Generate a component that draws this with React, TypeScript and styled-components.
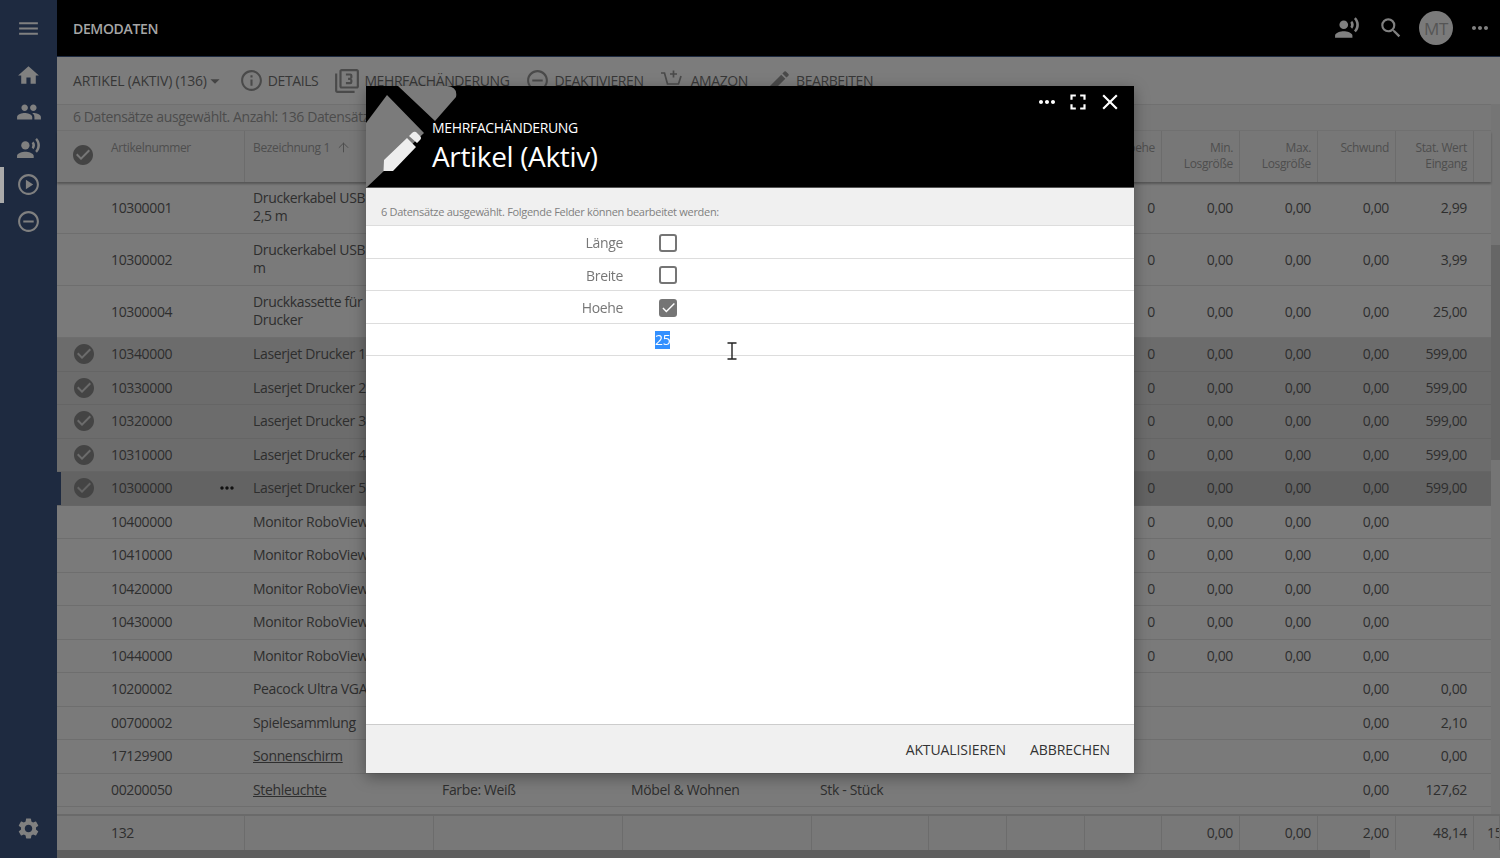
import React from "react";
import styled, { createGlobalStyle, css } from "styled-components";
import {
    MdCheckCircle,
    MdEdit,
    MdFilter3,
    MdHome,
    MdInfoOutline,
    MdMenu,
    MdMoreHoriz,
    MdOutlinePlayCircle,
    MdPeople,
    MdRecordVoiceOver,
    MdRemoveCircleOutline,
    MdSearch,
    MdSettings,
    MdArrowDropDown,
    MdFullscreen,
    MdClose,
    MdCheck,
} from "react-icons/md";
import { ArrowUp } from "lucide-react";

type Row = {
    num: string;
    name: React.ReactNode;
    link?: boolean;
    checked?: boolean;
    active?: boolean;
    tall?: boolean;
    cols?: string[];
    hoehe?: string;
    min?: string;
    max?: string;
    schwund?: string;
    stat?: string;
};

const stock = (stat?: string) => ({ hoehe: "0", min: "0,00", max: "0,00", schwund: "0,00", stat });

const ROWS: Row[] = [
    { num: "10300001", name: <>Druckerkabel USB<br />2,5 m</>, tall: true, ...stock("2,99") },
    { num: "10300002", name: <>Druckerkabel USB<br />m</>, tall: true, ...stock("3,99") },
    { num: "10300004", name: <>Druckkassette für L<br />Drucker</>, tall: true, ...stock("25,00") },
    { num: "10340000", name: "Laserjet Drucker 1000", checked: true, ...stock("599,00") },
    { num: "10330000", name: "Laserjet Drucker 2100", checked: true, ...stock("599,00") },
    { num: "10320000", name: "Laserjet Drucker 3100", checked: true, ...stock("599,00") },
    { num: "10310000", name: "Laserjet Drucker 4100", checked: true, ...stock("599,00") },
    { num: "10300000", name: "Laserjet Drucker 5100", checked: true, active: true, ...stock("599,00") },
    { num: "10400000", name: "Monitor RoboView 17", ...stock() },
    { num: "10410000", name: "Monitor RoboView 19", ...stock() },
    { num: "10420000", name: "Monitor RoboView 21", ...stock() },
    { num: "10430000", name: "Monitor RoboView 22", ...stock() },
    { num: "10440000", name: "Monitor RoboView 24", ...stock() },
    { num: "10200002", name: "Peacock Ultra VGA", schwund: "0,00", stat: "0,00" },
    { num: "00700002", name: "Spielesammlung", schwund: "0,00", stat: "2,10" },
    { num: "17129900", name: "Sonnenschirm", link: true, schwund: "0,00", stat: "0,00" },
    {
        num: "00200050",
        name: "Stehleuchte",
        link: true,
        cols: ["Farbe: Weiß", "Möbel & Wohnen", "Stk - Stück"],
        schwund: "0,00",
        stat: "127,62",
    },
];

const GlobalStyle = createGlobalStyle`
    html, body {
        margin: 0;
        height: 100%;
        overflow: hidden;
        background: #7a7a7a;
        font-family: "Open Sans", "Noto Sans", sans-serif;
        letter-spacing: -0.35px;
    }
    * {
        box-sizing: border-box;
    }
`;

const columns = css`
    display: grid;
    grid-template-columns: 188px 189px 189px 189px 117px 78px 78px 77px 78px 78px 78px 78px 1fr;
`;

const CartPlusIcon = () => (
    <svg width="24" height="24" viewBox="0 0 24 24" fill="none" stroke="currentColor" strokeWidth="1.7">
        <path d="M1 4h3.5l3 11h11l2.5-8" />
        <path d="M5 19.5h16" strokeWidth="2" />
        <path d="M13.5 1.5v7M10 5h7" />
    </svg>
);

const PencilMark = () => (
    <svg width="100" height="102" viewBox="0 0 100 102">
        <path
            fill="#7b7b7b"
            d="M32 0h49q11 1 9 11l-21 24zM0 37l21-28 37 38-58 55z"
        />
        <path
            fill="#eeeeee"
            d="M17.5 85l.5-11 23-22 9 9-23 24zM43 50l3-3q2-2 4-1l4 4q2 2 0 4l-3 3z"
        />
    </svg>
);

const IBeam = () => (
    <svg width="10" height="18" viewBox="0 0 10 18" fill="none" stroke="#222" strokeWidth="1.4">
        <path d="M0.5 1h9M5 1v16M0.5 17h9" />
    </svg>
);

export default function App() {
    return (
        <>
            <GlobalStyle />
            <Page>
                <Sidebar>
                    <MenuButton>
                        <MdMenu size={25} />
                    </MenuButton>
                    <NavItem>
                        <MdHome size={25} />
                    </NavItem>
                    <NavItem>
                        <MdPeople size={26} />
                    </NavItem>
                    <NavItem>
                        <MdRecordVoiceOver size={25} />
                    </NavItem>
                    <NavItem $active>
                        <MdOutlinePlayCircle size={25} />
                    </NavItem>
                    <NavItem>
                        <MdRemoveCircleOutline size={25} />
                    </NavItem>
                    <SettingsItem>
                        <MdSettings size={25} />
                    </SettingsItem>
                </Sidebar>
                <Main>
                    <TopBar>
                        <Brand>DEMODATEN</Brand>
                        <TopIcons>
                            <VoiceIcon>
                                <MdRecordVoiceOver size={26} />
                            </VoiceIcon>
                            <MdSearch size={26} />
                            <Avatar>MT</Avatar>
                            <MdMoreHoriz size={24} />
                        </TopIcons>
                    </TopBar>
                    <Toolbar>
                        <ViewPicker>
                            ARTIKEL (AKTIV) (136)
                            <MdArrowDropDown size={22} />
                        </ViewPicker>
                        <ToolButton>
                            <MdInfoOutline size={25} />
                            DETAILS
                        </ToolButton>
                        <ToolButton>
                            <MdFilter3 size={26} />
                            MEHRFACHÄNDERUNG
                        </ToolButton>
                        <ToolButton>
                            <MdRemoveCircleOutline size={25} />
                            DEAKTIVIEREN
                        </ToolButton>
                        <CartButton>
                            <CartPlusIcon />
                            AMAZON
                        </CartButton>
                        <PencilButton>
                            <MdEdit size={26} />
                            BEARBEITEN
                        </PencilButton>
                    </Toolbar>
                    <Middle>
                        <Content>
                            <InfoBar>6 Datensätze ausgewählt. Anzahl: 136 Datensätze</InfoBar>
                            <HeadRow>
                                <NumHead>
                                    <CheckSlot $head>
                                        <MdCheckCircle size={24} />
                                    </CheckSlot>
                                    Artikelnummer
                                </NumHead>
                                <HeadCell>
                                    Bezeichnung 1
                                    <SortIcon>
                                        <ArrowUp size={15} strokeWidth={1.6} />
                                    </SortIcon>
                                </HeadCell>
                                <HeadCell />
                                <HeadCell />
                                <HeadCell />
                                <HeadCell />
                                <HeadCell />
                                <HeadCell $right>Hoehe</HeadCell>
                                <HeadCell $right>Min.<br />Losgröße</HeadCell>
                                <HeadCell $right>Max.<br />Losgröße</HeadCell>
                                <HeadCell $right>Schwund</HeadCell>
                                <HeadCell $right>Stat. Wert<br />Eingang</HeadCell>
                            </HeadRow>
                            <Rows>
                                {ROWS.map((row) => (
                                    <DataRow key={row.num} $tall={row.tall} $checked={row.checked} $active={row.active}>
                                        <NumCell>
                                            <CheckSlot>{row.checked && <MdCheckCircle size={24} />}</CheckSlot>
                                            {row.num}
                                            {row.active && (
                                                <RowDots>
                                                    <MdMoreHoriz size={20} />
                                                </RowDots>
                                            )}
                                        </NumCell>
                                        <Cell $link={row.link} $wrap={row.tall}>{row.name}</Cell>
                                        <Cell>{row.cols?.[0]}</Cell>
                                        <Cell>{row.cols?.[1]}</Cell>
                                        <Cell>{row.cols?.[2]}</Cell>
                                        <Cell />
                                        <Cell />
                                        <Cell $right>{row.hoehe}</Cell>
                                        <Cell $right>{row.min}</Cell>
                                        <Cell $right>{row.max}</Cell>
                                        <Cell $right>{row.schwund}</Cell>
                                        <Cell $right>{row.stat}</Cell>
                                    </DataRow>
                                ))}
                            </Rows>
                        </Content>
                        <VScroll>
                            <VThumb />
                        </VScroll>
                    </Middle>
                    <SumRow>
                        <SumCell $first>132</SumCell>
                        <SumCell />
                        <SumCell />
                        <SumCell />
                        <SumCell />
                        <SumCell />
                        <SumCell />
                        <SumCell />
                        <SumCell $right>0,00</SumCell>
                        <SumCell $right>0,00</SumCell>
                        <SumCell $right>2,00</SumCell>
                        <SumCell $right>48,14</SumCell>
                        <SumCell>15</SumCell>
                    </SumRow>
                    <HScroll>
                        <HThumb />
                    </HScroll>
                </Main>
            </Page>
            <Backdrop>
                <Dialog>
                    <DialogHead>
                        <Mark>
                            <PencilMark />
                        </Mark>
                        <DialogActions>
                            <MdMoreHoriz size={24} />
                            <MdFullscreen size={26} />
                            <MdClose size={26} />
                        </DialogActions>
                        <DialogKicker>MEHRFACHÄNDERUNG</DialogKicker>
                        <DialogTitle>Artikel (Aktiv)</DialogTitle>
                    </DialogHead>
                    <DialogInfo>6 Datensätze ausgewählt. Folgende Felder können bearbeitet werden:</DialogInfo>
                    <FieldRow>
                        <FieldLabel>Länge</FieldLabel>
                        <Checkbox />
                    </FieldRow>
                    <FieldRow>
                        <FieldLabel>Breite</FieldLabel>
                        <Checkbox />
                    </FieldRow>
                    <FieldRow>
                        <FieldLabel>Hoehe</FieldLabel>
                        <Checkbox $checked>
                            <MdCheck size={17} />
                        </Checkbox>
                    </FieldRow>
                    <FieldRow>
                        <FieldLabel />
                        <ValueInput>
                            <Selected>25</Selected>
                        </ValueInput>
                        <Cursor>
                            <IBeam />
                        </Cursor>
                    </FieldRow>
                    <DialogSpacer />
                    <DialogFoot>
                        <FootButton>AKTUALISIEREN</FootButton>
                        <FootButton>ABBRECHEN</FootButton>
                    </DialogFoot>
                </Dialog>
            </Backdrop>
        </>
    );
}

const Page = styled.div`
    display: flex;
    height: 858px;
    overflow: hidden;
`;

const Sidebar = styled.nav`
    display: flex;
    flex-direction: column;
    align-items: stretch;
    width: 57px;
    flex-shrink: 0;
    background: #1e2a40;
    color: #808080;
`;

const MenuButton = styled.div`
    display: flex;
    align-items: center;
    justify-content: center;
    height: 57px;
`;

const NavItem = styled.div<{ $active?: boolean }>`
    display: flex;
    align-items: center;
    justify-content: center;
    height: 36.5px;
    border-left: 4px solid ${(p) => (p.$active ? "#aaaaaa" : "transparent")};
    padding-right: 4px;
`;

const SettingsItem = styled(NavItem)`
    margin-top: auto;
    height: 60px;
`;

const Main = styled.div`
    display: flex;
    flex-direction: column;
    flex: 1;
    min-width: 0;
`;

const TopBar = styled.header`
    display: flex;
    align-items: center;
    justify-content: space-between;
    height: 57px;
    flex-shrink: 0;
    padding: 0 8px 0 16px;
    background: #000;
    border-bottom: 1px solid #1e2a40;
`;

const Brand = styled.div`
    font-size: 14px;
    font-weight: 600;
    color: #a6a6a6;
`;

const TopIcons = styled.div`
    display: flex;
    align-items: center;
    gap: 15px;
    color: #808080;
`;

const VoiceIcon = styled.span`
    display: flex;
    margin-right: 3px;
`;

const Avatar = styled.div`
    display: flex;
    align-items: center;
    justify-content: center;
    width: 34px;
    height: 34px;
    border-radius: 50%;
    background: #7a7a7a;
    color: #555;
    font-size: 17px;
`;

const Toolbar = styled.div`
    display: flex;
    align-items: center;
    gap: 16px;
    height: 47px;
    flex-shrink: 0;
    padding-left: 16px;
    background: #7c7c7c;
    color: #373737;
    font-size: 14px;
`;

const ViewPicker = styled.div`
    display: flex;
    align-items: center;
    letter-spacing: -0.2px;
    margin-right: -3px;
    svg {
        margin-left: -3px;
        color: #444;
    }
`;

const ToolButton = styled.div`
    display: flex;
    align-items: center;
    gap: 4px;
    letter-spacing: -0.4px;
    white-space: nowrap;
    svg {
        color: #4a4a4a;
    }
`;

const CartButton = styled(ToolButton)`
    gap: 7px;
`;

const PencilButton = styled(ToolButton)`
    margin-left: 2px;
`;

const Middle = styled.div`
    display: flex;
    flex: 1;
    min-height: 0;
`;

const Content = styled.div`
    width: 1434px;
    display: flex;
    flex-direction: column;
`;

const InfoBar = styled.div`
    height: 27px;
    padding-left: 16px;
    background: #787878;
    border-top: 1px solid #707070;
    border-bottom: 1px solid #707070;
    color: #4c4c4c;
    font-size: 14px;
    letter-spacing: -0.4px;
    line-height: 24px;
    white-space: nowrap;
`;

const HeadRow = styled.div`
    ${columns};
    height: 51px;
    flex-shrink: 0;
    background: #777;
    box-shadow: 0 2px 2px rgba(0, 0, 0, 0.3);
    position: relative;
    z-index: 1;
`;

const HeadCell = styled.div<{ $right?: boolean }>`
    padding: 9px ${(p) => (p.$right ? "6px" : "8px")} 0 8px;
    border-right: 1px solid #6c6c6c;
    color: #4e4e4e;
    font-size: 12px;
    line-height: 16px;
    text-align: ${(p) => (p.$right ? "right" : "left")};
    white-space: nowrap;
    overflow: hidden;
`;

const NumHead = styled(HeadCell)`
    display: flex;
    align-items: flex-start;
    padding-left: 14px;
`;

const SortIcon = styled.span`
    display: inline-block;
    vertical-align: -3px;
    margin-left: 6px;
`;

const CheckSlot = styled.span<{ $head?: boolean }>`
    display: inline-block;
    width: ${(p) => (p.$head ? "40px" : "39px")};
    height: 24px;
    flex-shrink: 0;
    color: #444;
    margin-top: ${(p) => (p.$head ? "3px" : "0")};
    svg {
        display: block;
    }
`;

const Rows = styled.div`
    flex: 1;
    overflow: hidden;
`;

const DataRow = styled.div<{ $tall?: boolean; $checked?: boolean; $active?: boolean }>`
    ${columns};
    height: ${(p) => (p.$tall ? "52px" : "33.5px")};
    align-items: stretch;
    background: ${(p) => (p.$active ? "#636363" : p.$checked ? "#6c6c6c" : "#7a7a7a")};
    border-bottom: 1px solid ${(p) => (p.$checked ? "#656565" : "#6e6e6e")};
    ${(p) => p.$active && "box-shadow: inset 4px 0 0 #1e2a40;"}
`;

const Cell = styled.div<{ $right?: boolean; $link?: boolean; $wrap?: boolean }>`
    display: flex;
    align-items: center;
    justify-content: ${(p) => (p.$right ? "flex-end" : "flex-start")};
    padding: 0 ${(p) => (p.$right ? "7px" : "8px")} 0 8px;
    color: #2e2e2e;
    font-size: 14px;
    line-height: 18px;
    white-space: nowrap;
    overflow: hidden;
    text-decoration: ${(p) => (p.$link ? "underline" : "none")};
    ${(p) => p.$wrap && "display: block; padding-top: 7px;"}
`;

const NumCell = styled(Cell)`
    padding-left: 15px;
`;

const RowDots = styled.span`
    display: flex;
    margin-left: auto;
    color: #111;
`;

const VScroll = styled.div`
    flex: 1;
    background: #757575;
`;

const VThumb = styled.div`
    height: 215px;
    margin-top: 141px;
    background: #666;
`;

const SumRow = styled.div`
    ${columns};
    height: 36px;
    flex-shrink: 0;
    border-top: 2px solid #6a6a6a;
    background: #787878;
`;

const SumCell = styled.div<{ $right?: boolean; $first?: boolean }>`
    display: flex;
    align-items: center;
    justify-content: ${(p) => (p.$right ? "flex-end" : "flex-start")};
    padding: 0 6px 2px ${(p) => (p.$first ? "54px" : "13px")};
    border-right: 1px solid #6c6c6c;
    color: #2e2e2e;
    font-size: 14px;
    white-space: nowrap;
    overflow: hidden;
`;

const HScroll = styled.div`
    height: 8px;
    flex-shrink: 0;
    background: #777;
`;

const HThumb = styled.div`
    width: 1313px;
    height: 100%;
    background: #5f5f5f;
`;

const Backdrop = styled.div`
    position: fixed;
    inset: 0;
    z-index: 10;
    display: flex;
    align-items: flex-start;
    justify-content: center;
    padding-top: 86px;
`;

const Dialog = styled.div`
    display: flex;
    flex-direction: column;
    width: 768px;
    height: 687px;
    background: #fff;
    box-shadow: 0 4px 14px rgba(0, 0, 0, 0.35);
`;

const DialogHead = styled.div`
    position: relative;
    height: 102px;
    flex-shrink: 0;
    padding: 33px 0 0 66px;
    background: #000;
    border-bottom: 1px solid #555;
    overflow: hidden;
    color: #fff;
`;

const Mark = styled.div`
    position: absolute;
    left: 0;
    top: 0;
    svg {
        display: block;
    }
`;

const DialogActions = styled.div`
    position: absolute;
    top: 3px;
    right: 11px;
    display: flex;
    align-items: center;
    gap: 6px;
`;

const DialogKicker = styled.div`
    position: relative;
    font-size: 14px;
    line-height: 18px;
`;

const DialogTitle = styled.div`
    position: relative;
    margin-top: 1px;
    font-size: 28px;
    line-height: 37px;
`;

const DialogInfo = styled.div`
    height: 38px;
    flex-shrink: 0;
    padding: 16px 0 0 15px;
    background: #f0f0f0;
    border-bottom: 1px solid #ddd;
    color: #808080;
    font-size: 11px;
    letter-spacing: -0.3px;
    line-height: 16px;
`;

const FieldRow = styled.div`
    position: relative;
    display: flex;
    align-items: center;
    height: 32.5px;
    flex-shrink: 0;
    padding-top: 1.5px;
    border-bottom: 1px solid #ddd;
`;

const FieldLabel = styled.div`
    width: 257px;
    color: #777;
    font-size: 14px;
    text-align: right;
`;

const Checkbox = styled.div<{ $checked?: boolean }>`
    display: flex;
    align-items: center;
    justify-content: center;
    width: 18px;
    height: 18px;
    margin-left: 36px;
    border: 2px solid #757575;
    border-radius: 3px;
    background: ${(p) => (p.$checked ? "#757575" : "#fff")};
    color: #fff;
    svg {
        flex-shrink: 0;
    }
`;

const ValueInput = styled.div`
    margin-left: 32px;
    font-size: 14px;
    line-height: 18px;
`;

const Selected = styled.span`
    display: inline-block;
    background: #3390ff;
    color: #fff;
`;

const Cursor = styled.div`
    position: absolute;
    left: 361px;
    top: 18px;
    z-index: 1;
    svg {
        display: block;
    }
`;

const DialogSpacer = styled.div`
    flex: 1;
`;

const DialogFoot = styled.div`
    display: flex;
    align-items: center;
    justify-content: flex-end;
    gap: 24px;
    height: 49px;
    flex-shrink: 0;
    padding-right: 24px;
    background: #f0f0f0;
    border-top: 1px solid #ccc;
`;

const FootButton = styled.div`
    color: #333;
    font-size: 14px;
    letter-spacing: -0.1px;
`;
